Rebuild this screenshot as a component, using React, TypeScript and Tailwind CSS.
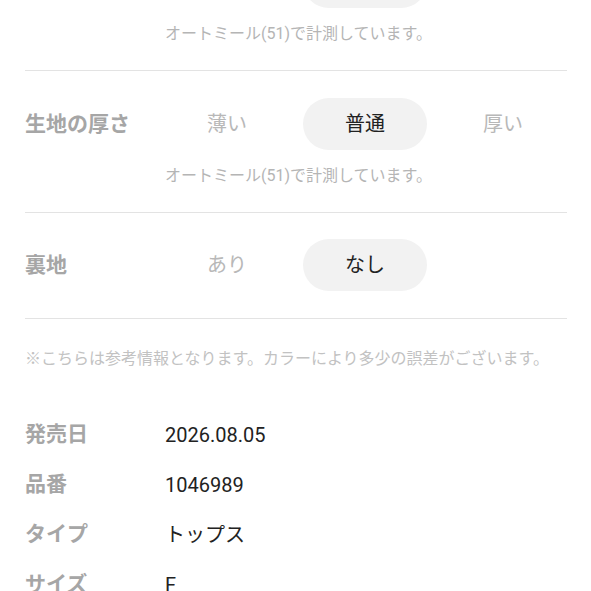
const font = { fontFamily: 'Roboto, "Noto Sans CJK JP", sans-serif' };

type Row = {
  label: string;
  options: string[];
  selected: number;
  caption?: string;
};

// the first row sits above the fold: only its selected pill and caption show
const rows: Row[] = [
  { label: '', options: ['', '', ''], selected: 1, caption: 'オートミール(51)で計測しています。' },
  { label: '生地の厚さ', options: ['薄い', '普通', '厚い'], selected: 1, caption: 'オートミール(51)で計測しています。' },
  { label: '裏地', options: ['あり', 'なし'], selected: 1 },
];

const details = [
  { label: '発売日', value: '2026.08.05' },
  { label: '品番', value: '1046989' },
  { label: 'タイプ', value: 'トップス' },
  { label: 'サイズ', value: 'F' },
];

function SpecRow({ row, first }: { row: Row; first?: boolean }) {
  return (
    <section
      className={`border-b border-[#e3e3e3] ${first ? '-mt-[71px]' : ''} ${
        row.caption ? 'pt-[27px] pb-[24px]' : 'pt-[26px] pb-[27px]'
      }`}
    >
      <div className="flex items-center">
        <div className="h-[30px] w-[140px] shrink-0 text-[21px] font-bold text-[#a6a6a6] leading-[30px]">
          {row.label}
        </div>
        <div className="grid grid-cols-[124px_124px_124px] gap-[14px]">
          {row.options.map((opt, i) => (
            <div
              key={i}
              className={`flex h-[52px] items-center justify-center rounded-full text-[20px] ${
                i === row.selected ? 'bg-[#f2f2f2] text-[#222]' : 'text-[#b8b8b8]'
              }`}
            >
              {opt}
            </div>
          ))}
        </div>
      </div>
      {row.caption && (
        <p className="mt-[14px] pl-[140px] text-[16px] leading-[24px] text-[#b5b5b5]">
          {row.caption}
        </p>
      )}
    </section>
  );
}

export default function App() {
  return (
    <div className="h-[591px] w-[591px] overflow-hidden bg-white" style={font}>
      <div className="pl-[25px] pr-[24px]">
        {rows.map((row, i) => (
          <SpecRow key={i} row={row} first={i === 0} />
        ))}

        <p className="mt-[28px] text-[16px] leading-[24px] text-[#c2c2c2] whitespace-nowrap">
          ※こちらは参考情報となります。カラーにより多少の誤差がございます。
        </p>

        <dl className="mt-[39px] flex flex-col">
          {details.map((d) => (
            <div key={d.label} className="flex h-[50px] items-center">
              <dt className="w-[140px] shrink-0 text-[21px] font-bold text-[#a6a6a6]">{d.label}</dt>
              <dd className="text-[20px] text-[#222]">{d.value}</dd>
            </div>
          ))}
        </dl>
      </div>
    </div>
  );
}
